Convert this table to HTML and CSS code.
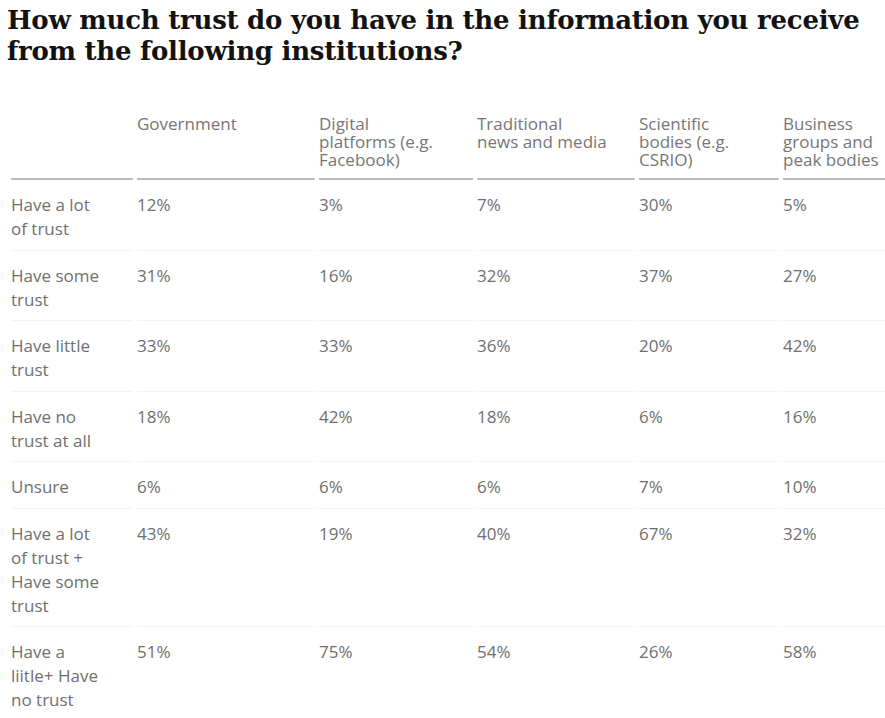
FILE: index.html
```html
<!DOCTYPE html>
<html lang="en">
<head>
<meta charset="utf-8">
<title>Trust in institutions</title>
<link rel="stylesheet" href="styles.css">
</head>
<body>
<main class="page">
  <h1 class="title">How much trust do you have in the information you receive from the following institutions?</h1>
  <table class="trust-table">
    <colgroup>
      <col class="col-label">
      <col class="col-gov">
      <col class="col-digital">
      <col class="col-trad">
      <col class="col-sci">
      <col class="col-biz">
    </colgroup>
    <thead>
      <tr>
        <th></th>
        <th>Government</th>
        <th>Digital<br>platforms (e.g.<br>Facebook)</th>
        <th>Traditional<br>news and media</th>
        <th>Scientific<br>bodies (e.g.<br>CSRIO)</th>
        <th>Business<br>groups and<br>peak bodies</th>
      </tr>
    </thead>
    <tbody>
      <tr><td>Have a lot<br>of trust</td><td>12%</td><td>3%</td><td>7%</td><td>30%</td><td>5%</td></tr>
      <tr><td>Have some<br>trust</td><td>31%</td><td>16%</td><td>32%</td><td>37%</td><td>27%</td></tr>
      <tr><td>Have little<br>trust</td><td>33%</td><td>33%</td><td>36%</td><td>20%</td><td>42%</td></tr>
      <tr><td>Have no<br>trust at all</td><td>18%</td><td>42%</td><td>18%</td><td>6%</td><td>16%</td></tr>
      <tr><td>Unsure</td><td>6%</td><td>6%</td><td>6%</td><td>7%</td><td>10%</td></tr>
      <tr><td>Have a lot<br>of trust +<br>Have some<br>trust</td><td>43%</td><td>19%</td><td>40%</td><td>67%</td><td>32%</td></tr>
      <tr><td>Have a<br>liitle+ Have<br>no trust</td><td>51%</td><td>75%</td><td>54%</td><td>26%</td><td>58%</td></tr>
    </tbody>
  </table>
</main>
</body>
</html>
```

FILE: styles.css
```css
html, body {
  margin: 0;
  padding: 0;
  background: #ffffff;
  overflow: hidden;
}

.page {
  padding: 5px 0 0 7px;
}

.title {
  margin: 0;
  font-family: "DejaVu Serif", "Liberation Serif", serif;
  font-weight: 700;
  font-size: 26px;
  letter-spacing: -0.25px;
  line-height: 31px;
  color: #121212;
  width: 874px;
}

.trust-table {
  margin-top: 48px;
  border-collapse: separate;
  border-spacing: 4px 0;
  table-layout: fixed;
  width: 910px;
  font-family: "Open Sans", "Liberation Sans", sans-serif;
  font-size: 17px;
  color: #6f6f6f;
}

.col-label { width: 122px; }
.col-gov { width: 178px; }
.col-digital { width: 154px; }
.col-trad { width: 158px; }
.col-sci { width: 140px; }
.col-biz { width: 130px; }

.trust-table th {
  text-align: left;
  vertical-align: top;
  font-weight: 400;
  line-height: 18px;
  color: #767676;
  padding: 0 0 9px 0;
  border-bottom: 2px solid #bababa;
}

.trust-table td {
  vertical-align: top;
  line-height: 24px;
  padding: 13px 0 8.5px 0;
  border-bottom: 1px solid #f3f3f3;
}
```
